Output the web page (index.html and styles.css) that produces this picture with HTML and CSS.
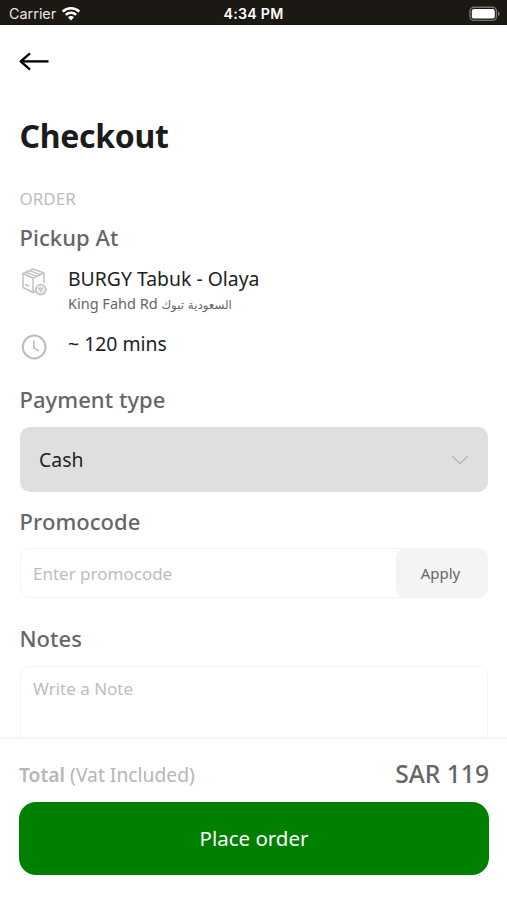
FILE: index.html
```html
<!DOCTYPE html>
<html lang="en">
<head>
<meta charset="utf-8">
<title>Checkout</title>
<link rel="stylesheet" href="styles.css">
</head>
<body>
<div class="app">
  <div class="status">
    <div class="carrier"><span>Carrier</span>
      <svg width="20" height="15" viewBox="0 0 20 15" fill="none" stroke="#fff" stroke-width="2.5"><path d="M1.7 5.6a11.8 11.8 0 0 1 16.6 0"/><path d="M4.8 8.9a7.4 7.4 0 0 1 10.4 0"/><path d="M10 14.4 7 11.3a4.2 4.2 0 0 1 6 0z" fill="#fff" stroke="none"/></svg>
    </div>
    <div class="time">4:34 PM</div>
    <svg class="battery" width="32" height="16" viewBox="0 0 32 16"><rect x="1" y="1.2" width="26.5" height="13.2" rx="4" fill="none" stroke="#77736f" stroke-width="1.4"/><rect x="2.8" y="3" width="23" height="9.6" rx="2.2" fill="#fff"/><path d="M29 5.5q1.8.6 1.8 2.3T29 10.1z" fill="#77736f"/></svg>
  </div>
  <main class="content">
    <svg class="back" width="32" height="20" viewBox="0 0 32 20" fill="none" stroke="#000" stroke-width="2.4"><path d="M30.5 10.4H2.5"/><path d="M12 2.3 2.7 10.4l9.3 8.2" stroke-linejoin="round"/></svg>
    <h1>Checkout</h1>
    <div class="eyebrow">ORDER</div>
    <h2 class="pickup">Pickup At</h2>
    <div class="row place">
      <svg width="28" height="28" viewBox="0 0 28 28" fill="none" stroke="#c2c2c2" stroke-width="1.5" stroke-linejoin="round"><path d="M13 1 24 5v10M13 1 3 5.5v14L13 24.5l3-1.5M3 5.5 13 10 24 5M13 10v14.5M6 4.2l10.8 4.2M9.5 2.6 20.5 6.6M5 16.5l4 1.8"/><circle cx="20.8" cy="21.6" r="5" fill="#f2f2f2" stroke-width="1.8"/><path d="M19 20.1h3.6l-1.8 3.6z" stroke-width="1.1"/></svg>
      <div>
        <div class="name">BURGY Tabuk - Olaya</div>
        <div class="address">King Fahd Rd <span class="arabic" lang="ar">السعودية تبوك</span></div>
      </div>
    </div>
    <div class="row eta">
      <svg width="28" height="28" viewBox="0 0 28 28" fill="none" stroke="#bdbdbd"><circle cx="14.2" cy="14" r="11.4" stroke-width="2"/><path d="M13.8 7.5v7.2l5.2 3.4" stroke-width="1.6"/></svg>
      <div class="name">~ 120 mins</div>
    </div>
    <h2 class="payment">Payment type</h2>
    <div class="select"><span>Cash</span>
      <svg width="18" height="12" viewBox="0 0 18 12" fill="none" stroke="#b4b4b4" stroke-width="1.3"><path d="M1.3 2 9 9.7 16.7 2"/></svg>
    </div>
    <h2 class="promo-title">Promocode</h2>
    <div class="promo"><span class="hint">Enter promocode</span><div class="apply">Apply</div></div>
    <h2 class="notes-title">Notes</h2>
    <div class="notes"><span class="hint">Write a Note</span></div>
  </main>
  <footer>
    <div class="total"><div class="label"><b>Total</b> (Vat Included)</div><div class="amount">SAR 119</div></div>
    <div class="order">Place order</div>
  </footer>
</div>
</body>
</html>
```

FILE: styles.css
```css
* { box-sizing: border-box; }
body { margin: 0; background: #fff; font-family: "Noto Sans", sans-serif; color: #222; }
svg { display: block; flex: none; }
.app { height: 900px; display: flex; flex-direction: column; overflow: hidden; }
.status { height: 25px; flex: none; background: #1c1814; color: #fff; display: grid; grid-template-columns: 1fr auto 1fr; align-items: center; padding: 2px 6px 0 9px; font: 14.4px/20px Inter, sans-serif; }
.carrier { display: flex; align-items: center; gap: 5px; color: #e6e4e2; }
.time { font-weight: 600; font-size: 14.2px; letter-spacing: .25px; margin-left: -3px; }
.battery { justify-self: end; }
.content { flex: 1; min-height: 0; overflow: hidden; padding: 26px 19px 0 20px; }
.back { margin-left: -2px; }
h1, h2 { margin: 0; }
h1 { font-size: 32px; line-height: 44px; margin-top: 43px; margin-left: -.5px; letter-spacing: -.3px; color: #1b1b1b; }
.eyebrow { font-size: 17px; line-height: 24px; margin-top: 29px; margin-left: -.5px; color: #bcbcbc; }
h2 { font-size: 22px; line-height: 30px; font-weight: 550; margin-left: -.5px; letter-spacing: .05px; color: #666; }
.pickup { margin-top: 11px; }
.row { display: flex; gap: 20px; }
.place { margin-top: 12px; }
.place svg { margin-top: 4px; }
.name { font-size: 19.4px; line-height: 28px; }
.place .name { margin-top: 1px; }
.address { font-size: 14.5px; line-height: 20px; color: #666; white-space: nowrap; }
.arabic { font-family: "DejaVu Sans", sans-serif; font-size: 11.8px; }
.eta { margin-top: 15px; }
.eta svg { margin-top: 3px; }
.payment { margin-top: 23px; }
.select { height: 65px; margin-top: 13px; border-radius: 10px; background: #dfdfdf; display: flex; align-items: center; justify-content: space-between; padding: 0 19px; font-size: 19.4px; }
.promo-title { margin-top: 14px; }
.promo { height: 50px; margin-top: 12px; border: 1px solid #f3f3f3; border-radius: 10px; display: flex; align-items: center; justify-content: space-between; padding-left: 12px; }
.hint { color: #bdbdbd; font-size: 17px; line-height: 24px; }
.promo .hint { margin-top: 1px; }
.apply { width: 92px; height: 50px; margin-right: -1px; border-radius: 10px; background: #f4f4f4; color: #666; font-size: 15px; line-height: 50px; text-align: center; padding-right: 3px; }
.notes-title { margin-top: 25px; }
.notes { height: 120px; margin-top: 13px; border: 1px solid #f3f3f3; border-radius: 10px; padding: 10px 12px; }
footer { flex: none; height: 163px; border-top: 2px solid #f6f6f6; padding: 19px 18px 0 19px; background: #fff; }
.total { height: 32px; display: flex; align-items: center; justify-content: space-between; color: #b6b6b6; font-size: 19.3px; }
.total b { font-weight: 600; }
.amount { font-size: 24.6px; line-height: 32px; font-weight: 500; color: #666; }
.order { height: 73px; margin-top: 12px; border-radius: 17px; background: #008000; color: #fff; font-size: 20.5px; line-height: 73px; text-align: center; }
```
